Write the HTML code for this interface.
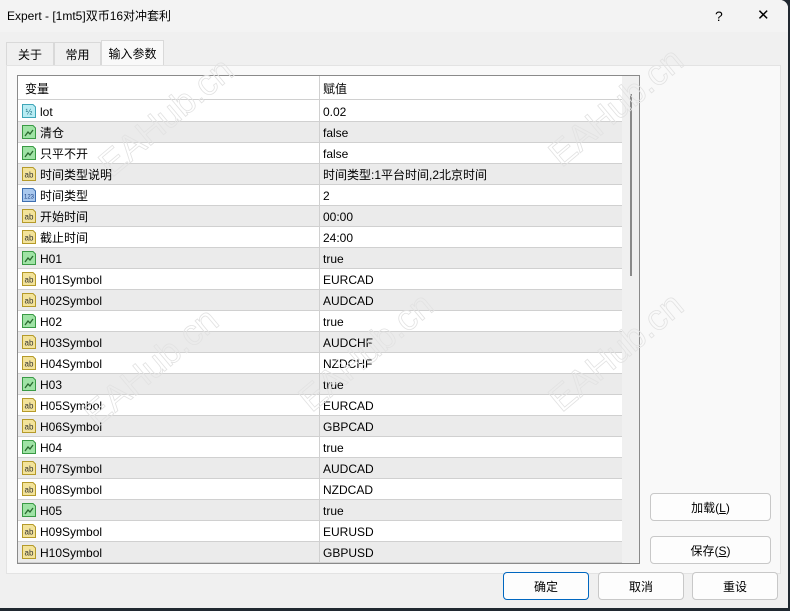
<!DOCTYPE html><html><head><meta charset="utf-8"><style>
*{margin:0;padding:0;box-sizing:border-box}
body{width:790px;height:611px;background:#202830;font-family:"Liberation Sans","Noto Sans CJK SC",sans-serif;font-size:12px;line-height:14px;color:#000;overflow:hidden;position:relative}
.win{position:absolute;left:0;top:0;width:788px;height:608px;background:#f0f0f0;border-radius:0 8px 0 0;overflow:hidden}
.title{position:absolute;left:0;top:0;width:100%;height:32px;background:#f3f3f3}
.title span{position:absolute;left:7px;top:9px;font-size:12px}
.tb{position:absolute;top:7px;font-size:15px;line-height:18px}
.tab{position:absolute;top:42px;height:23px;border:1px solid #d9d9d9;border-bottom:none;background:#f0f0f0;padding:5px 0 0 0;text-align:center}
.panel{position:absolute;left:6px;top:65px;width:775px;height:509px;background:#f9f9f9;border:1px solid #e3e3e3}
.tbl{position:absolute;left:17px;top:75px;width:623px;height:489px;border:1px solid #8a8a8a;background:#fff;overflow:hidden}
.row{position:absolute;left:0;width:604px;height:21px;border-bottom:1px solid #d0d0d0}
.row.g{background:#ebebeb}
.row .n{position:absolute;left:22px;top:4px}
.row .v{position:absolute;left:305px;top:4px}
.row .ic{position:absolute;left:3px;top:2px}
.vl{position:absolute;left:301px;top:0;width:1px;height:489px;background:#d0d0d0}
.sb{position:absolute;left:604px;top:0;width:17px;height:489px;background:#f0f0f0}
.btn{position:absolute;height:28px;border:1px solid #c8c8c8;border-radius:4px;background:#fdfdfd;text-align:center;padding-top:7px}
.wm{position:absolute;color:transparent;-webkit-text-stroke:0.8px #e2e2e2;font-size:36px;transform:rotate(-40deg);font-family:"Liberation Sans",sans-serif}
</style></head><body><div class="win">
<div class="title"><span>Expert - [1mt5]双币16对冲套利</span><div class="tb" style="left:715px;font-size:14px">?</div><div class="tb" style="left:757px">✕</div></div>
<div class="tab" style="left:6px;width:48px">关于</div>
<div class="tab" style="left:54px;width:47px">常用</div>
<div class="tab" style="left:101px;width:63px;top:40px;height:26px;background:#f9f9f9;padding-top:6px">输入参数</div>
<div class="panel"></div>
<div class="tbl">
<div class="row" style="top:0;height:24px"><span class="n" style="left:7px;top:6px">变量</span><span class="v" style="top:6px">赋值</span></div>
<div id="rows"></div>
<div class="vl"></div>
<div class="sb"><div style="position:absolute;left:8px;top:18px;width:2px;height:182px;background:#8a8a8a"></div></div>
</div>
<div class="btn" style="left:650px;top:493px;width:121px">加载(<u>L</u>)</div>
<div class="btn" style="left:650px;top:536px;width:121px">保存(<u>S</u>)</div>
<div class="btn" style="left:503px;top:572px;width:86px;border:1px solid #0067c0">确定</div>
<div class="btn" style="left:598px;top:572px;width:86px">取消</div>
<div class="btn" style="left:692px;top:572px;width:86px">重设</div>
<div class="wm" style="left:85px;top:110px">EAHub.cn</div>
<div class="wm" style="left:535px;top:100px">EAHub.cn</div>
<div class="wm" style="left:285px;top:345px">EAHub.cn</div>
<div class="wm" style="left:535px;top:345px">EAHub.cn</div>
<div class="wm" style="left:70px;top:360px">EAHub.cn</div>
</div>
<script>
var d=[["h","lot","0.02"],["b","清仓","false"],["b","只平不开","false"],["a","时间类型说明","时间类型:1平台时间,2北京时间"],["n","时间类型","2"],["a","开始时间","00:00"],["a","截止时间","24:00"],["b","H01","true"],["a","H01Symbol","EURCAD"],["a","H02Symbol","AUDCAD"],["b","H02","true"],["a","H03Symbol","AUDCHF"],["a","H04Symbol","NZDCHF"],["b","H03","true"],["a","H05Symbol","EURCAD"],["a","H06Symbol","GBPCAD"],["b","H04","true"],["a","H07Symbol","AUDCAD"],["a","H08Symbol","NZDCAD"],["b","H05","true"],["a","H09Symbol","EURUSD"],["a","H10Symbol","GBPUSD"]];
var ic={a:['#f3e39a','#b59a2a','ab','#333'],b:['#9fe3a5','#3a9a45','',''],n:['#a9c8ee','#3e6fb0','123','#1a3f80'],h:['#b8ecf3','#3fa6b8','½','#1a6f80']};
var h='';d.forEach(function(r,i){var c=ic[r[0]];var g=r[0]=='b'?'<path d="M4 12 L7 8 L9 10 L12 6" stroke="#2a6a30" stroke-width="1.3" fill="none"/>':'<text x="8" y="11.5" font-size="'+(r[0]=='n'?6:8)+'" text-anchor="middle" fill="'+c[3]+'" font-family="Liberation Sans">'+c[2]+'</text>';
h+='<div class="row'+(i%2?' g':'')+'" style="top:'+(25+i*21)+'px"><svg class="ic" width="16" height="16"><path d="M1.5 1.5H12L14.5 4V14.5H1.5Z" fill="'+c[0]+'" stroke="'+c[1]+'"/>'+g+'</svg><span class="n">'+r[1]+'</span><span class="v">'+r[2]+'</span></div>';});
document.getElementById('rows').outerHTML=h;
</script></body></html>
